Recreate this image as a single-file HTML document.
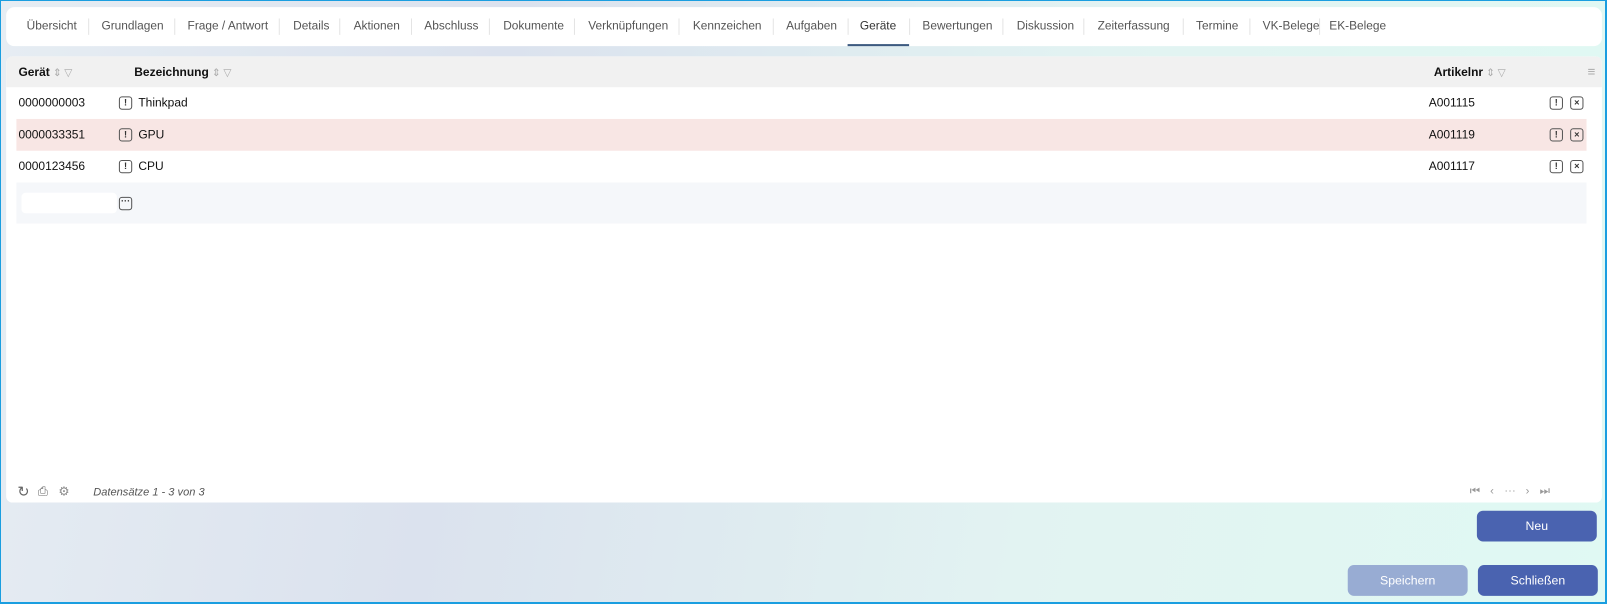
<!DOCTYPE html>
<html><head><meta charset="utf-8"><style>
*{box-sizing:border-box;margin:0;padding:0}
html,body{width:1607px;height:604px;overflow:hidden}
body{font-family:"Liberation Sans",Arial,sans-serif;font-size:12px;color:#111;position:relative;
background:linear-gradient(100deg,#e6edf3 0%,#dbe2ee 30%,#e2f3f2 65%,#e0f9f3 100%)}
.frame{position:absolute;left:0;top:0;width:1607px;height:604px;border:1px solid #1a9ee0;border-width:1px 2px 2px 1px;z-index:10;pointer-events:none}
.s{position:absolute;left:0;top:0;width:1568px;height:589px;transform:scale(1.0249,1.0255);transform-origin:0 0}
.a{position:absolute}
.tabs{left:6px;top:7px;width:1557px;height:38px;background:#fff;border-radius:8px}
.tab{position:absolute;top:12px;font-size:11.6px;color:#555;white-space:nowrap}
.sep{position:absolute;top:11px;width:1px;height:16px;background:#e4e4e4}
.card{left:6px;top:55px;width:1557px;height:435px;background:#fff;border-radius:6px;overflow:hidden}
.hdr{position:absolute;left:0;top:0;width:1557px;height:30px;background:#f1f1f1}
.h{position:absolute;top:9px;font-weight:bold;font-size:11.7px;color:#111;white-space:nowrap}
.ic{color:#aaa;font-weight:normal;font-size:10px;margin-left:3px}
.row{position:absolute;left:10px;width:1532px;height:31px}
.cell{position:absolute;top:9px;font-size:11.7px}
.ib{position:absolute;width:13px;height:13px;border:1.4px solid #555;border-radius:3px;font-size:9px;font-weight:bold;line-height:10px;text-align:center;color:#333}
.btn{position:absolute;height:30px;border-radius:6px;color:#fff;font-size:12px;text-align:center;line-height:30px}
</style></head><body>
<div class="frame"></div>
<div class="s">
<div class="a tabs">
<span class="tab" style="left:20px">Übersicht</span><span class="sep" style="left:80px"></span>
<span class="tab" style="left:93px">Grundlagen</span><span class="sep" style="left:164px"></span>
<span class="tab" style="left:177px">Frage / Antwort</span><span class="sep" style="left:266px"></span>
<span class="tab" style="left:280px">Details</span><span class="sep" style="left:325px"></span>
<span class="tab" style="left:339px">Aktionen</span><span class="sep" style="left:395px"></span>
<span class="tab" style="left:408px">Abschluss</span><span class="sep" style="left:471px"></span>
<span class="tab" style="left:485px">Dokumente</span><span class="sep" style="left:554px"></span>
<span class="tab" style="left:568px">Verknüpfungen</span><span class="sep" style="left:656px"></span>
<span class="tab" style="left:670px">Kennzeichen</span><span class="sep" style="left:748px"></span>
<span class="tab" style="left:761px">Aufgaben</span><span class="sep" style="left:821px"></span>
<span class="tab" style="left:833px;color:#333">Geräte</span><span class="sep" style="left:881px"></span>
<div class="a" style="left:821px;top:36px;width:60px;height:2px;background:#3d5a80"></div>
<span class="tab" style="left:894px">Bewertungen</span><span class="sep" style="left:972px"></span>
<span class="tab" style="left:986px">Diskussion</span><span class="sep" style="left:1051px"></span>
<span class="tab" style="left:1065px">Zeiterfassung</span><span class="sep" style="left:1148px"></span>
<span class="tab" style="left:1161px">Termine</span><span class="sep" style="left:1213px"></span>
<span class="tab" style="left:1226px">VK-Belege</span><span class="sep" style="left:1281px"></span>
<span class="tab" style="left:1291px">EK-Belege</span>
</div>
<div class="a card">
<div class="hdr">
<span class="h" style="left:12px">Gerät<span class="ic">⇕ ▽</span></span>
<span class="h" style="left:125px">Bezeichnung<span class="ic">⇕ ▽</span></span>
<span class="h" style="left:1393px">Artikelnr<span class="ic">⇕ ▽</span></span>
<span class="a" style="left:1543px;top:7px;color:#aaa;font-size:13px">≡</span>
</div>
<div class="row" style="top:30px"><span class="cell" style="left:2px">0000000003</span><span class="ib" style="left:100px;top:9px">!</span><span class="cell" style="left:119px">Thinkpad</span><span class="cell" style="left:1378px">A001115</span><span class="ib" style="left:1496px;top:9px">!</span><span class="ib" style="left:1516px;top:9px">×</span></div>
<div class="row" style="top:61px;background:#f8e6e4"><span class="cell" style="left:2px">0000033351</span><span class="ib" style="left:100px;top:9px">!</span><span class="cell" style="left:119px">GPU</span><span class="cell" style="left:1378px">A001119</span><span class="ib" style="left:1496px;top:9px">!</span><span class="ib" style="left:1516px;top:9px">×</span></div>
<div class="row" style="top:92px"><span class="cell" style="left:2px">0000123456</span><span class="ib" style="left:100px;top:9px">!</span><span class="cell" style="left:119px">CPU</span><span class="cell" style="left:1378px">A001117</span><span class="ib" style="left:1496px;top:9px">!</span><span class="ib" style="left:1516px;top:9px">×</span></div>
<div class="row" style="top:123px;height:40px;background:#f5f7fa"><div class="a" style="left:5px;top:10px;width:93px;height:20px;background:#fff;border-radius:4px"></div><span class="ib" style="left:100px;top:14px;line-height:6px">···</span></div>
<span class="a" style="left:11px;top:416px;color:#666;font-size:14px">↻</span>
<span class="a" style="left:31px;top:417px;color:#666;font-size:12px">⎙</span>
<span class="a" style="left:51px;top:417px;color:#888;font-size:12px">⚙</span>
<span class="a" style="left:85px;top:419px;color:#555;font-style:italic;font-size:10.8px">Datensätze 1 - 3 von 3</span>
<span class="a" style="left:1428px;top:418px;color:#999;font-size:11px;letter-spacing:10px">⏮‹⋯›⏭</span>
</div>
<div class="btn" style="left:1441px;top:498px;width:117px;background:#4a63b0">Neu</div>
<div class="btn" style="left:1315px;top:551px;width:117px;background:#98acd3">Speichern</div>
<div class="btn" style="left:1442px;top:551px;width:117px;background:#4a63b0">Schließen</div>
</div>
</body></html>
